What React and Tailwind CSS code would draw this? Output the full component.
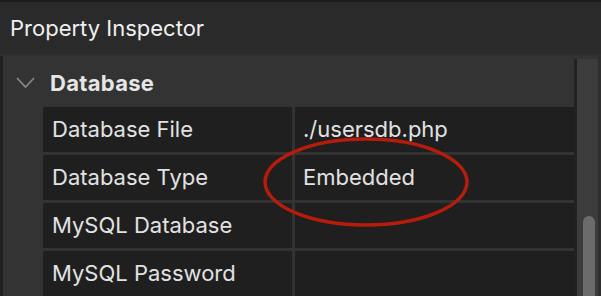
const rows = [
  { label: "Database File", value: "./usersdb.php" },
  { label: "Database Type", value: "Embedded" },
  { label: "MySQL Database", value: "" },
  { label: "MySQL Password", value: "" },
];

export default function App() {
  return (
    <div
      className="relative w-[601px] h-[296px] overflow-hidden bg-[#1c1c1c] pt-[2px] flex flex-col"
      style={{ fontFamily: "Inter, 'Open Sans', sans-serif" }}
    >
      {/* Title bar */}
      <div className="h-[52px] shrink-0 bg-[#2a2a2a] flex items-center pl-[10px] text-[22px] text-[#f0f0f0]">
        Property Inspector
      </div>
      <div className="h-[2px] shrink-0 bg-[#2f2f2f]" />

      {/* Content */}
      <div className="flex-1 flex bg-[#333333]">
        <div className="w-[3px] bg-[#1f1f1f]" />
        <div className="flex-1 flex flex-col">
          <div className="h-[51px] shrink-0 flex items-center">
            <svg width="40" height="20" viewBox="0 0 40 20" className="shrink-0">
              <polyline
                points="14,6 22.5,15 31,6"
                fill="none"
                stroke="#8a8a8a"
                strokeWidth="1.6"
              />
            </svg>
            <span className="ml-[7px] mt-[3px] text-[22px] font-bold tracking-[0.3px] text-[#e6e6e6]">
              Database
            </span>
          </div>
          <div className="flex flex-col gap-[3px] pl-[40px]">
            {rows.map((r) => (
              <div key={r.label} className="h-[45px] flex gap-[3px]">
                <div className="w-[249px] bg-[#1f1f1f] flex items-center pl-[9px] text-[22px] text-[#e2e2e2]">
                  {r.label}
                </div>
                <div className="flex-1 bg-[#1f1f1f] flex items-center pl-[8px] text-[22px] text-[#e2e2e2]">
                  {r.value}
                </div>
              </div>
            ))}
          </div>
        </div>
        <div className="w-[3px] mt-[3px] bg-[#222222]" />
        <div className="relative w-[21px] mt-[3px] bg-[#3c3c3c]">
          <div className="absolute left-[6px] top-[157px] w-[12px] h-[100px] rounded-full bg-[#6b6b6b]" />
        </div>
        <div className="w-[3px] bg-[#2e2e2e]" />
      </div>

      {/* Red annotation */}
      <svg
        className="absolute left-0 top-0 pointer-events-none"
        width="601"
        height="296"
      >
        <ellipse
          cx="366"
          cy="182"
          rx="101"
          ry="43"
          fill="none"
          stroke="#b51c0c"
          strokeWidth="3.5"
        />
      </svg>
    </div>
  );
}
